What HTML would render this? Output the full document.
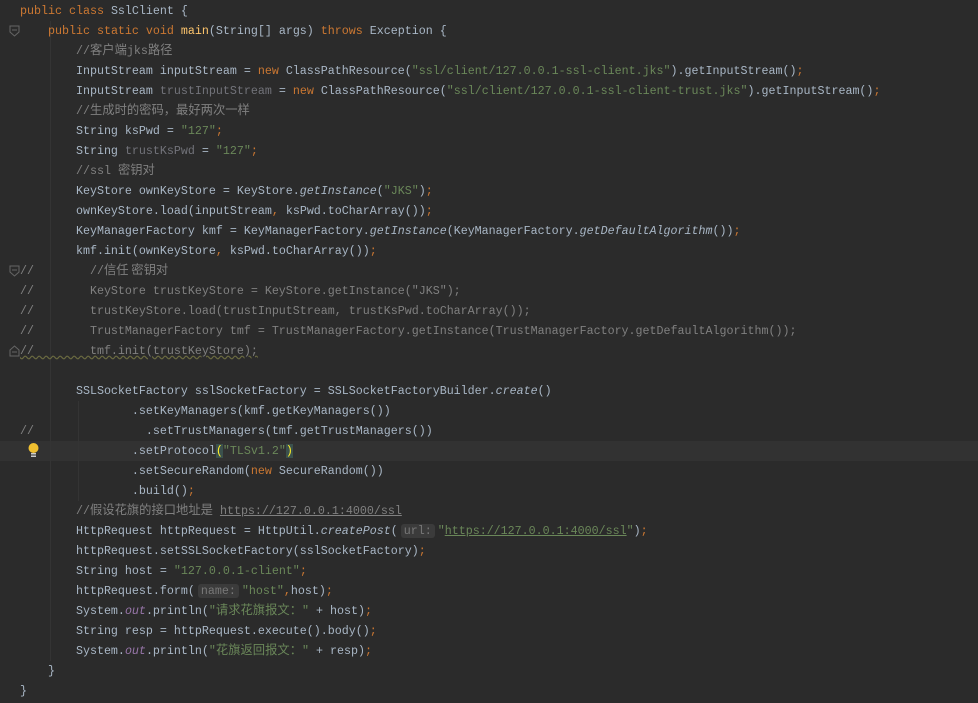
<!DOCTYPE html>
<html><head><meta charset="utf-8">
<style>
html,body{margin:0;padding:0;background:#2b2b2b;width:978px;height:703px;overflow:hidden}
#ed{position:relative;width:978px;height:703px;font-family:"Liberation Mono","Noto Sans CJK SC",monospace;font-size:11.67px;color:#a9b7c6}
.l{position:absolute;left:20px;height:20px;line-height:20px;white-space:pre;overflow:hidden}
.k{color:#cc7832}.s{color:#6a8759}.c{color:#808080}.m{color:#ffc66d}.i{font-style:italic}
.u{color:#72737a}.o{color:#9876aa;font-style:italic}
.z{font-family:"Noto Sans CJK SC",sans-serif;font-size:12.3px;line-height:0}
.h{background:#3b3b3b;color:#787878;border-radius:3px;padding:0 3px;margin:0 3px}
.a{text-decoration:underline}
.g{position:absolute;width:1px;background:#343434}
.bm{background:#3b514d;color:#ffef28}
</style></head><body><div id="ed">
<div style="position:absolute;left:0;top:441px;width:978px;height:20px;background:#323232"></div>
<div class="g" style="left:50px;top:21px;height:640px"></div>
<div class="g" style="left:78px;top:401px;height:100px"></div>
<svg style="position:absolute;left:9px;top:25px" width="11" height="12"><path d="M1 1H10V7L5.5 11L1 7Z" fill="none" stroke="#666" /><path d="M3 5H8" stroke="#666"/></svg>
<svg style="position:absolute;left:9px;top:265px" width="11" height="12"><path d="M1 1H10V7L5.5 11L1 7Z" fill="none" stroke="#666" /><path d="M3 5H8" stroke="#666"/></svg>
<svg style="position:absolute;left:9px;top:345px" width="11" height="12"><path d="M1 11H10V5L5.5 1L1 5Z" fill="none" stroke="#666" /><path d="M3 7H8" stroke="#666"/></svg>
<svg style="position:absolute;left:27px;top:442px" width="13" height="16"><circle cx="6.5" cy="6" r="5" fill="#f0c030"/><rect x="4" y="11" width="5" height="1.5" fill="#ccc"/><rect x="4" y="13.5" width="5" height="1.5" fill="#ccc"/></svg>
<div class="l" style="top:1px"><span class="k">public class </span>SslClient {</div>
<div class="l" style="top:21px">    <span class="k">public static void </span><span class="m">main</span>(String[] args) <span class="k">throws </span>Exception {</div>
<div class="l" style="top:41px">        <span class="c">//<span class="z">客户端</span>jks<span class="z">路径</span></span></div>
<div class="l" style="top:61px">        InputStream inputStream = <span class="k">new </span>ClassPathResource(<span class="s">"ssl/client/127.0.0.1-ssl-client.jks"</span>).getInputStream()<span class="k">;</span></div>
<div class="l" style="top:81px">        InputStream <span class="u">trustInputStream</span> = <span class="k">new </span>ClassPathResource(<span class="s">"ssl/client/127.0.0.1-ssl-client-trust.jks"</span>).getInputStream()<span class="k">;</span></div>
<div class="l" style="top:101px">        <span class="c">//<span class="z">生成时的密码，最好两次一样</span></span></div>
<div class="l" style="top:121px">        String ksPwd = <span class="s">"127"</span><span class="k">;</span></div>
<div class="l" style="top:141px">        String <span class="u">trustKsPwd</span> = <span class="s">"127"</span><span class="k">;</span></div>
<div class="l" style="top:161px">        <span class="c">//ssl <span class="z">密钥对</span></span></div>
<div class="l" style="top:181px">        KeyStore ownKeyStore = KeyStore.<span class="i">getInstance</span>(<span class="s">"JKS"</span>)<span class="k">;</span></div>
<div class="l" style="top:201px">        ownKeyStore.load(inputStream<span class="k">, </span>ksPwd.toCharArray())<span class="k">;</span></div>
<div class="l" style="top:221px">        KeyManagerFactory kmf = KeyManagerFactory.<span class="i">getInstance</span>(KeyManagerFactory.<span class="i">getDefaultAlgorithm</span>())<span class="k">;</span></div>
<div class="l" style="top:241px">        kmf.init(ownKeyStore<span class="k">, </span>ksPwd.toCharArray())<span class="k">;</span></div>
<div class="l c" style="top:261px">//        //<span class="z">信任 密钥对</span></div>
<div class="l c" style="top:281px">//        KeyStore trustKeyStore = KeyStore.getInstance("JKS");</div>
<div class="l c" style="top:301px">//        trustKeyStore.load(trustInputStream, trustKsPwd.toCharArray());</div>
<div class="l c" style="top:321px">//        TrustManagerFactory tmf = TrustManagerFactory.getInstance(TrustManagerFactory.getDefaultAlgorithm());</div>
<div class="l c" style="top:341px;text-decoration:underline wavy #6a6a40">//        tmf.init(trustKeyStore);</div>
<div class="l" style="top:381px">        SSLSocketFactory sslSocketFactory = SSLSocketFactoryBuilder.<span class="i">create</span>()</div>
<div class="l" style="top:401px">                .setKeyManagers(kmf.getKeyManagers())</div>
<div class="l" style="top:421px"><span class="c">//</span>                .setTrustManagers(tmf.getTrustManagers())</div>
<div class="l" style="top:441px">                .setProtocol<span class="bm">(</span><span class="s">"TLSv1.2"</span><span class="bm">)</span></div>
<div class="l" style="top:461px">                .setSecureRandom(<span class="k">new </span>SecureRandom())</div>
<div class="l" style="top:481px">                .build()<span class="k">;</span></div>
<div class="l" style="top:501px">        <span class="c">//<span class="z">假设花旗的接口地址是</span> <span class="a">https://127.0.0.1:4000/ssl</span></span></div>
<div class="l" style="top:521px">        HttpRequest httpRequest = HttpUtil.<span class="i">createPost</span>(<span class="h">url:</span><span class="s">"<span class="a">https://127.0.0.1:4000/ssl</span>"</span>)<span class="k">;</span></div>
<div class="l" style="top:541px">        httpRequest.setSSLSocketFactory(sslSocketFactory)<span class="k">;</span></div>
<div class="l" style="top:561px">        String host = <span class="s">"127.0.0.1-client"</span><span class="k">;</span></div>
<div class="l" style="top:581px">        httpRequest.form(<span class="h">name:</span><span class="s">"host"</span><span class="k">,</span>host)<span class="k">;</span></div>
<div class="l" style="top:601px">        System.<span class="o">out</span>.println(<span class="s">"<span class="z">请求花旗报文：</span>"</span> + host)<span class="k">;</span></div>
<div class="l" style="top:621px">        String resp = httpRequest.execute().body()<span class="k">;</span></div>
<div class="l" style="top:641px">        System.<span class="o">out</span>.println(<span class="s">"<span class="z">花旗返回报文：</span>"</span> + resp)<span class="k">;</span></div>
<div class="l" style="top:661px">    }</div>
<div class="l" style="top:681px">}</div>
</div></body></html>
